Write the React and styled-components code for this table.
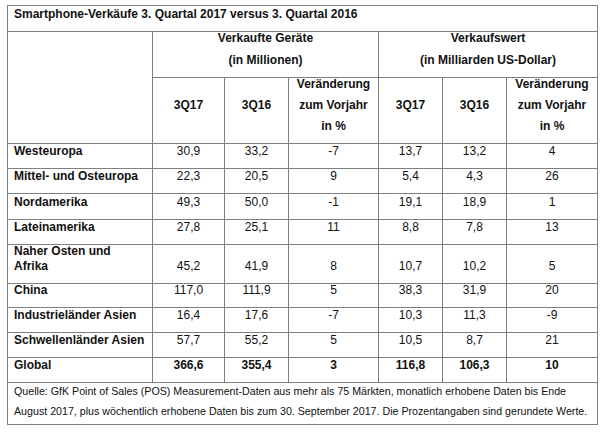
import React from "react";
import styled, { createGlobalStyle } from "styled-components";

const GlobalStyle = createGlobalStyle`
  html, body {
    margin: 0;
    padding: 0;
    background: #ffffff;
  }
  body {
    font-family: "Liberation Sans", Arial, sans-serif;
    color: #111111;
  }
`;

const Page = styled.div`
  padding: 5px 0 0 7px;
`;

const Grid = styled.div`
  display: grid;
  width: fit-content;
  grid-template-columns: 144px 71px 63px 89px 63px 63px 90px;
  grid-template-rows: 25px 45px 65px 24px 24px 25px 24px 38px 23px 24px 24px 24px 41px;
  gap: 1px;
  padding: 1px;
  background: #808080;
`;

const Cell = styled.div`
  background: #ffffff;
  display: flex;
  flex-direction: column;
  justify-content: flex-end;
  align-items: ${(p) => (p.$left ? "flex-start" : "center")};
  text-align: ${(p) => (p.$left ? "left" : "center")};
  gap: ${(p) => p.$gap || 0}px;
  padding: 0 6px ${(p) => (p.$pb != null ? p.$pb : 9)}px;
  font-size: 12px;
  line-height: 15px;
  font-weight: ${(p) => (p.$bold ? 700 : 400)};
  white-space: nowrap;
  grid-column: ${(p) => p.$col || "auto"};
  grid-row: ${(p) => p.$row || "auto"};
  min-width: 0;
`;

const Footer = styled.div`
  grid-column: 1 / -1;
  background: #ffffff;
  padding: 0 6px;
  font-size: 10.67px;
  white-space: nowrap;
`;

const FootLine = styled.div`
  line-height: 16px;
  & + & {
    margin-top: 4px;
  }
`;

const rows = [
  ["Westeuropa", "30,9", "33,2", "-7", "13,7", "13,2", "4"],
  ["Mittel- und Osteuropa", "22,3", "20,5", "9", "5,4", "4,3", "26"],
  ["Nordamerika", "49,3", "50,0", "-1", "19,1", "18,9", "1"],
  ["Lateinamerika", "27,8", "25,1", "11", "8,8", "7,8", "13"],
  [["Naher Osten und", "Afrika"], "45,2", "41,9", "8", "10,7", "10,2", "5"],
  ["China", "117,0", "111,9", "5", "38,3", "31,9", "20"],
  ["Industrieländer Asien", "16,4", "17,6", "-7", "10,3", "11,3", "-9"],
  ["Schwellenländer Asien", "57,7", "55,2", "5", "10,5", "8,7", "21"],
  ["Global", "366,6", "355,4", "3", "116,8", "106,3", "10"],
];

const Change = () => (
  <>
    <div>Veränderung</div>
    <div>zum Vorjahr</div>
    <div>in %</div>
  </>
);

export default function App() {
  return (
    <>
      <GlobalStyle />
      <Page>
        <Grid>
          <Cell $left $bold $col="1 / -1">
            Smartphone-Verkäufe 3. Quartal 2017 versus 3. Quartal 2016
          </Cell>

          <Cell $col="1" $row="2 / 4" />
          <Cell $bold $gap={7} $col="2 / 5">
            <div>Verkaufte Geräte</div>
            <div>(in Millionen)</div>
          </Cell>
          <Cell $bold $gap={7} $col="5 / 8">
            <div>Verkaufswert</div>
            <div>(in Milliarden US-Dollar)</div>
          </Cell>

          <Cell $bold $pb={30}>3Q17</Cell>
          <Cell $bold $pb={30}>3Q16</Cell>
          <Cell $bold $gap={6}>
            <Change />
          </Cell>
          <Cell $bold $pb={30}>3Q17</Cell>
          <Cell $bold $pb={30}>3Q16</Cell>
          <Cell $bold $gap={6}>
            <Change />
          </Cell>

          {rows.map((r, i) => {
            const isTotal = r[0] === "Global";
            return (
              <React.Fragment key={i}>
                <Cell $left $bold>
                  {Array.isArray(r[0]) ? r[0].map((t) => <div key={t}>{t}</div>) : r[0]}
                </Cell>
                {r.slice(1).map((v, j) => (
                  <Cell key={j} $bold={isTotal}>
                    {v}
                  </Cell>
                ))}
              </React.Fragment>
            );
          })}

          <Footer>
            <FootLine>
              Quelle: GfK Point of Sales (POS) Measurement-Daten aus mehr als 75 Märkten, monatlich erhobene Daten bis Ende
            </FootLine>
            <FootLine>
              August 2017, plus wöchentlich erhobene Daten bis zum 30. September 2017. Die Prozentangaben sind gerundete Werte.
            </FootLine>
          </Footer>
        </Grid>
      </Page>
    </>
  );
}
